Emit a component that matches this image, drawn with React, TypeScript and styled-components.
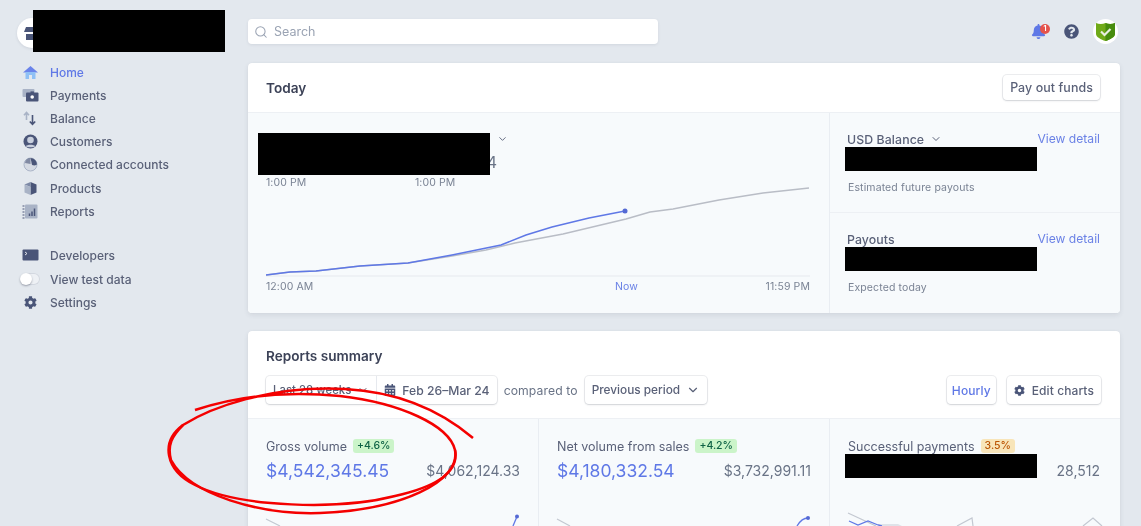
import React from "react";
import styled, { createGlobalStyle } from "styled-components";
import { ChevronDown, Search } from "lucide-react";
import { FaBell, FaCalendarAlt, FaCog, FaQuestionCircle } from "react-icons/fa";

const Global = createGlobalStyle`
  html, body { margin: 0; padding: 0; height: 526px; overflow: hidden; background: #e3e8ee; }
  * { box-sizing: border-box; }
  body { font-family: Inter, "Liberation Sans", sans-serif; color: #4f566b; font-size: 13px; }
`;

const Page = styled.div`
  position: relative;
  display: grid;
  grid-template-columns: 248px 872px;
  height: 526px;
  overflow: hidden;
  filter: blur(0.4px);
`;

const Sidebar = styled.aside`
  position: relative;
  padding: 18px 0 0 19px;
`;

const Brand = styled.div`
  width: 30px;
  height: 30px;
  margin-left: -2px;
  border-radius: 50%;
  background: #fff;
  display: flex;
  align-items: center;
  justify-content: center;
  box-shadow: 0 1px 3px rgba(60, 66, 87, 0.12);
  margin-bottom: 12.5px;
`;

const Redaction = styled.div<{ $w: number; $h: number }>`
  width: ${(p) => p.$w}px;
  height: ${(p) => p.$h}px;
  background: #000;
`;

const OverlayRedaction = styled(Redaction)<{ $l: number; $t: number }>`
  position: absolute;
  left: ${(p) => p.$l}px;
  top: ${(p) => p.$t}px;
`;

const MetricRedaction = styled(Redaction)`
  margin-left: -3px;
`;

const NavGroup = styled.nav`
  display: flex;
  flex-direction: column;
  margin-bottom: 21.5px;
`;

const NavItem = styled.div<{ $active?: boolean }>`
  display: flex;
  align-items: center;
  height: 23.2px;
  gap: 9px;
  font-size: 12px;
  font-weight: 500;
  color: ${(p) => (p.$active ? "#5f78e6" : "#5a6178")};
`;

const NavIcon = styled.span`
  width: 22px;
  display: flex;
  justify-content: center;
  align-items: center;
  flex: none;
`;

const Toggle = styled.span`
  position: relative;
  width: 20px;
  height: 12px;
  border-radius: 6px;
  background: #eef1f5;
  box-shadow: inset 0 0 0 1px #d3d8e0;
  &::after {
    content: "";
    position: absolute;
    left: 0;
    top: 0;
    width: 12px;
    height: 12px;
    border-radius: 50%;
    background: #fff;
    box-shadow: 0 1px 2px rgba(60, 66, 87, 0.45);
  }
`;

const Main = styled.main`
  padding-top: 19px;
  display: flex;
  flex-direction: column;
`;

const TopBar = styled.div`
  display: flex;
  align-items: center;
  justify-content: space-between;
  height: 25px;
  margin-bottom: 19px;
`;

const SearchBox = styled.div`
  width: 410px;
  height: 25px;
  background: #fff;
  border-radius: 4px;
  display: flex;
  align-items: center;
  gap: 6px;
  padding-left: 6px;
  color: #9aa3b3;
  font-size: 12.5px;
  box-shadow: 0 1px 3px rgba(60, 66, 87, 0.1);
`;

const TopIcons = styled.div`
  display: flex;
  align-items: center;
  margin-right: 2px;
`;

const BellWrap = styled.span`
  position: relative;
  display: flex;
  color: #5f78e6;
  margin-right: 18px;
`;

const BellBadge = styled.span`
  position: absolute;
  top: 0;
  right: -4px;
  width: 10px;
  height: 10px;
  border-radius: 50%;
  background: #e5534b;
  color: #fff;
  font-size: 7px;
  font-weight: 700;
  line-height: 10px;
  text-align: center;
`;

const HelpIcon = styled.span`
  display: flex;
  color: #4a5578;
  margin-right: 14px;
`;

const Avatar = styled.span`
  width: 25px;
  height: 25px;
  border-radius: 50%;
  background: #fff;
  display: flex;
  align-items: center;
  justify-content: center;
`;

const Card = styled.section`
  background: #fff;
  border-radius: 4px;
  box-shadow: 0 2px 5px rgba(60, 66, 87, 0.1), 0 0 1px rgba(60, 66, 87, 0.12);
`;

const TodayCard = styled(Card)`
  height: 250px;
  margin-bottom: 18px;
  display: flex;
  flex-direction: column;
`;

const CardHead = styled.header`
  height: 50px;
  flex: none;
  display: flex;
  align-items: center;
  justify-content: space-between;
  padding: 0 20px 0 18px;
  border-bottom: 1px solid #edf0f4;
`;

const CardTitle = styled.h2`
  margin: 0;
  font-size: 13.6px;
  font-weight: 600;
  color: #3c4257;
`;

const Button = styled.button<{ $blue?: boolean; $small?: boolean }>`
  height: ${(p) => (p.$small ? 28 : 25)}px;
  padding: 0 ${(p) => (p.$blue ? 5 : 7)}px;
  margin-left: 11px;
  border: 0;
  background: #fff;
  border-radius: 4px;
  display: inline-flex;
  align-items: center;
  gap: 7px;
  font: 500 ${(p) => (p.$small ? 12 : 12.4)}px Inter, "Liberation Sans", sans-serif;
  letter-spacing: 0.1px;
  color: ${(p) => (p.$blue ? "#5f78e6" : "#5a6178")};
  box-shadow: 0 1px 2px rgba(60, 66, 87, 0.16), 0 0 0 1px rgba(60, 66, 87, 0.09);
`;

const TodayBody = styled.div`
  flex: 1;
  display: grid;
  grid-template-columns: 581px 1px 290px;
  background: #f7fafc;
  border-radius: 0 0 4px 4px;
`;

const VLine = styled.div`
  background: #e9edf2;
`;

const ChartPane = styled.div`
  position: relative;
  padding: 19px 19px 0 18px;
  display: flex;
  flex-direction: column;
`;

const StatRow = styled.div`
  display: grid;
  grid-template-columns: 149px 82px 11px;
  height: 44px;
`;

const StatCell = styled.div`
  display: flex;
  flex-direction: column;
  justify-content: flex-end;
  font-size: 11px;
  color: #697386;
`;

const BigFour = styled.span`
  font-size: 16px;
  line-height: 20px;
  text-align: right;
  color: #697386;
  margin-bottom: 4px;
`;

const ChevronCell = styled.span`
  display: flex;
  justify-content: flex-end;
  color: #5a6178;
  padding-top: 1px;
`;

const ChartArt = styled.svg`
  display: block;
  width: 544px;
  height: 93px;
  margin-top: 9px;
`;

const AxisRow = styled.div`
  display: flex;
  position: relative;
  justify-content: space-between;
  font-size: 10.5px;
  color: #7a8394;
  margin-top: 2px;
  letter-spacing: 0.1px;
`;

const NowTick = styled.span`
  position: absolute;
  left: 349px;
  color: #6b82e6;
`;

const TimeLabels = styled.div`
  display: grid;
  grid-template-columns: 149px auto;
  font-size: 10.5px;
  color: #7a8394;
  height: 0;
  letter-spacing: 0.1px;
`;

const SidePane = styled.div`
  display: grid;
  grid-template-rows: 99px 1px 100px;
`;

const HLine = styled.div`
  background: #edf0f4;
`;

const Balance = styled.div`
  padding: 18px 20px 0 15px;
`;

const BalanceHead = styled.div`
  display: flex;
  align-items: center;
  justify-content: space-between;
  height: 16px;
  padding-left: 2px;
  font-size: 12.3px;
  font-weight: 500;
  letter-spacing: 0.1px;
  color: #5a6178;
`;

const BalanceLabel = styled.span`
  display: flex;
  align-items: center;
  gap: 6px;
`;

const Link = styled.span`
  color: #6b82e6;
  font-weight: 400;
  font-size: 12.1px;
  letter-spacing: 0;
  margin-top: -2px;
`;

const BalanceNote = styled.div`
  margin: 10px 0 0 3px;
  font-size: 10.5px;
  letter-spacing: 0.12px;
  color: #7a8394;
`;

const ReportsCard = styled(Card)`
  height: 300px;
`;

const ReportsHead = styled.div`
  height: 88px;
  padding: 17px 19px 0 18px;
  border-bottom: 1px solid #edf0f4;
  display: flex;
  flex-direction: column;
  gap: 12px;
`;

const FilterRow = styled.div`
  display: flex;
  align-items: center;
`;

const FilterGroup = styled.div`
  display: flex;
  align-items: center;
  height: 28px;
  background: #fff;
  border-radius: 4px;
  box-shadow: 0 1px 2px rgba(60, 66, 87, 0.16), 0 0 0 1px rgba(60, 66, 87, 0.09);
  font-weight: 500;
  color: #5a6178;
`;

const FilterPart = styled.span<{ $divided?: boolean; $size: number }>`
  display: flex;
  align-items: center;
  height: 100%;
  gap: 6px;
  padding: 0 7px;
  font-size: ${(p) => p.$size}px;
  border-left: ${(p) => (p.$divided ? "1px solid #e6e9ee" : "0")};
`;

const Compared = styled.span`
  margin: 0 7px;
  font-size: 12.2px;
  letter-spacing: 0.1px;
  color: #697386;
`;

const FilterSpacer = styled.span`
  flex: 1;
`;

const Metrics = styled.div`
  display: grid;
  grid-template-columns: 290px 291px 291px;
  background: #f7fafc;
  height: 211px;
`;

const Metric = styled.div<{ $first?: boolean }>`
  padding: 19px 18px 0 18px;
  border-left: ${(p) => (p.$first ? "0" : "1px solid #e9edf2")};
  &:last-child {
    padding-right: 20px;
  }
`;

const MetricHead = styled.div`
  display: flex;
  align-items: center;
  gap: 6px;
  height: 16px;
  font-size: 12.5px;
  color: #5a6178;
`;

const Pill = styled.span<{ $warn?: boolean }>`
  font-size: 10.5px;
  font-weight: 500;
  line-height: 14px;
  padding: 0 4px;
  border-radius: 3px;
  background: ${(p) => (p.$warn ? "#f8e5b9" : "#cbf4c9")};
  color: ${(p) => (p.$warn ? "#bb5504" : "#0e6245")};
`;

const MetricValues = styled.div`
  display: flex;
  align-items: center;
  justify-content: space-between;
  height: 24px;
`;

const MetricMain = styled.span`
  font-size: 17.5px;
  color: #5f78e6;
  margin-top: 8px;
`;

const MetricCompare = styled.span`
  font-size: 14px;
  color: #697386;
  margin-top: 9px;
`;

const Spark = styled.svg`
  display: block;
  width: 254px;
  height: 30px;
  margin-top: 34px;
  overflow: visible;
`;

const Scribble = styled.svg`
  position: absolute;
  left: 0;
  top: 0;
  width: 1141px;
  height: 526px;
  pointer-events: none;
`;

const D = "#4a5578";
const L = "#a9b3c6";

const Ic = ({ children }: { children: React.ReactNode }) => (
  <svg width="17" height="15" viewBox="0 0 17 15">{children}</svg>
);

const blue = [[0,90],[24,87],[50,86],[94,81],[142,78],[186,70],[235,60],[260,50],[286,42],[323,33],[359,26]];
const gray = [[0,90],[24,87],[50,86],[94,81],[142,78],[186,71],[220,65],[249,58],[297,49],[360,34],[384,27],[407,24],[453,15],[497,8],[543,3]];
const pts = (a: number[][]) => a.map((p) => p.join(",")).join(" ");

const navTop: [string, React.ReactNode, boolean?][] = [
  ["Home", <Ic><path d="M8.5 1 1 7.5h15z" fill="#6a83ea" /><path d="M3.5 7h10v7h-3.5v-4H7v4H3.5z" fill="#8fc0f5" /></Ic>, true],
  ["Payments", <Ic><rect x="0.5" y="1" width="12" height="8" rx="1" fill={L} /><rect x="4" y="4.5" width="12.5" height="9" rx="1" fill={D} /><circle cx="10.2" cy="9" r="1.8" fill="#fff" /><rect x="8.5" y="3.4" width="3.4" height="2" fill={D} /></Ic>],
  ["Balance", <Ic><path d="M4.5 9V2M2 4.3 4.5 1.5 7 4.3" fill="none" stroke={L} strokeWidth="1.6" /><path d="M10.5 4v9M7.8 10.5l2.7 2.8 2.7-2.8" fill="none" stroke={D} strokeWidth="1.6" /></Ic>],
  ["Customers", <Ic><circle cx="8.5" cy="7.5" r="7" fill={D} /><circle cx="8.5" cy="6" r="3.3" fill="#c9d0de" /><path d="M3.8 12.3c1.2-2 8.2-2 9.4 0-1.2 1.4-8.2 1.4-9.4 0z" fill="#c9d0de" /></Ic>],
  ["Connected accounts", <Ic><circle cx="8.5" cy="7.5" r="6.5" fill="#d5dae3" stroke={L} /><path d="M8.5 1a6.5 6.5 0 0 1 6.5 6.5c-1.5 1-3 1-4 .8-.6-.1-1-.5-1.2-1.1C9.5 5 9 3 8.5 1z" fill={D} /><path d="M3 6a5.5 5.5 0 0 1 5.5-5v6z" fill={D} opacity=".6" /></Ic>],
  ["Products", <Ic><path d="M8.5 1 14.5 3.5v8L8.5 14z" fill={D} /><path d="M8.5 1 2.5 3.5 8.5 6z" fill="#7d89a6" /><path d="M2.5 3.5 8.5 6v8l-6-2.5z" fill={L} /></Ic>],
  ["Reports", <Ic><rect x="3" y="0.5" width="12.5" height="14" rx="1" fill={L} /><path d="M0.5 2h2M0.5 5h2M0.5 8h2M0.5 11h2M0.5 14h2" stroke={D} strokeWidth="1" /><path d="M7.5 12V9.5M10 12V7.5M12.5 12V4.5" stroke={D} strokeWidth="1.5" /></Ic>],
];

const Sparkline = ({ g, b, dot, blob }: { g: string[]; b: string[]; dot?: [number, number]; blob?: string }) => (
  <Spark viewBox="0 0 254 30">
    {blob && <path d={blob} fill="#dfe3e9" />}
    {g.map((d, i) => <path key={i} d={d} fill="none" stroke="#c3c8d1" strokeWidth="1.2" />)}
    {b.map((d, i) => <path key={i} d={d} fill="none" stroke="#5f78e6" strokeWidth="1.3" />)}
    {dot && <circle cx={dot[0]} cy={dot[1]} r="2" fill="#5469d4" />}
  </Spark>
);

export default function App() {
  return (
    <>
      <Global />
      <Page>
        <Sidebar>
          <Brand>
            <svg width="16" height="15" viewBox="0 0 16 15"><path d="M2 1h12l2 5H0z" fill={D} /><rect x="2" y="8" width="12" height="6" fill={D} /></svg>
          </Brand>
          <OverlayRedaction $w={192} $h={42} $l={33} $t={10} />
          <NavGroup>
            {navTop.map(([label, icon, active]) => (
              <NavItem key={label} $active={active}>
                <NavIcon>{icon}</NavIcon>
                {label}
              </NavItem>
            ))}
          </NavGroup>
          <NavGroup>
            <NavItem>
              <NavIcon><Ic><rect x="0.5" y="1.5" width="16" height="11" rx="1" fill={D} /><path d="M3 4l2 1.5L3 7" fill="none" stroke="#fff" strokeWidth=".8" /></Ic></NavIcon>
              Developers
            </NavItem>
            <NavItem>
              <NavIcon><Toggle /></NavIcon>
              View test data
            </NavItem>
            <NavItem>
              <NavIcon><FaCog size={13} color={D} /></NavIcon>
              Settings
            </NavItem>
          </NavGroup>
        </Sidebar>

        <Main>
          <TopBar>
            <SearchBox><Search size={14} strokeWidth={1.8} />Search</SearchBox>
            <TopIcons>
              <BellWrap><FaBell size={15} /><BellBadge>1</BellBadge></BellWrap>
              <HelpIcon><FaQuestionCircle size={15} /></HelpIcon>
              <Avatar>
                <svg width="19" height="19" viewBox="0 0 19 19">
                  <path d="M0 1c3 1.2 6.5 1.2 9.5 0 3 1.2 6.5 1.2 9.5 0v11c0 3-5 5.5-9.5 7C5 17.5 0 15 0 12z" fill="#70aa18" />
                  <path d="M9.5 1c3 1.2 6.5 1.2 9.5 0v11c0 3-5 5.5-9.5 7z" fill="#478c0e" />
                  <path d="M5 9.5 8.5 13l6-6" fill="none" stroke="#e9efe0" strokeWidth="2.2" />
                </svg>
              </Avatar>
            </TopIcons>
          </TopBar>

          <TodayCard>
            <CardHead>
              <CardTitle>Today</CardTitle>
              <Button>Pay out funds</Button>
            </CardHead>
            <TodayBody>
              <ChartPane>
                <StatRow>
                  <StatCell />
                  <StatCell><BigFour>4</BigFour></StatCell>
                  <ChevronCell><ChevronDown size={12} /></ChevronCell>
                </StatRow>
                <TimeLabels><span>1:00 PM</span><span>1:00 PM</span></TimeLabels>
                <ChartArt viewBox="0 0 544 93">
                  <line x1="0" y1="91" x2="544" y2="91" stroke="#e6e9ee" />
                  <polyline points={pts(gray)} fill="none" stroke="#b9bdc6" strokeWidth="1.5" />
                  <polyline points={pts(blue)} fill="none" stroke="#5f78e6" strokeWidth="1.6" />
                  <circle cx="359" cy="26" r="2.5" fill="#5469d4" />
                </ChartArt>
                <AxisRow>
                  <span>12:00 AM</span>
                  <NowTick>Now</NowTick>
                  <span>11:59 PM</span>
                </AxisRow>
                <OverlayRedaction $w={232} $h={42} $l={10} $t={20} />
              </ChartPane>
              <VLine />
              <SidePane>
                <Balance>
                  <BalanceHead>
                    <BalanceLabel>USD Balance <ChevronDown size={12} /></BalanceLabel>
                    <Link>View detail</Link>
                  </BalanceHead>
                  <Redaction $w={192} $h={24} />
                  <BalanceNote>Estimated future payouts</BalanceNote>
                </Balance>
                <HLine />
                <Balance>
                  <BalanceHead>
                    <BalanceLabel>Payouts</BalanceLabel>
                    <Link>View detail</Link>
                  </BalanceHead>
                  <Redaction $w={192} $h={24} />
                  <BalanceNote>Expected today</BalanceNote>
                </Balance>
              </SidePane>
            </TodayBody>
          </TodayCard>

          <ReportsCard>
            <ReportsHead>
              <CardTitle>Reports summary</CardTitle>
              <FilterRow>
                <FilterGroup>
                  <FilterPart $size={11.4}>Last 28 weeks <ChevronDown size={12} /></FilterPart>
                  <FilterPart $size={12.2} $divided><FaCalendarAlt size={12} color={D} />Feb 26–Mar 24</FilterPart>
                </FilterGroup>
                <Compared>compared to</Compared>
                <FilterGroup>
                  <FilterPart $size={11.8}>Previous period <ChevronDown size={14} /></FilterPart>
                </FilterGroup>
                <FilterSpacer />
                <Button $blue $small>Hourly</Button>
                <Button $small><FaCog size={11} color={D} />Edit charts</Button>
              </FilterRow>
            </ReportsHead>
            <Metrics>
              <Metric $first>
                <MetricHead>Gross volume <Pill>+4.6%</Pill></MetricHead>
                <MetricValues><MetricMain>$4,542,345.45</MetricMain><MetricCompare>$4,062,124.33</MetricCompare></MetricValues>
                <Sparkline g={["M0 7 L14 14"]} b={["M247 14 L251 4.5"]} dot={[251, 4.5]} />
              </Metric>
              <Metric>
                <MetricHead>Net volume from sales <Pill>+4.2%</Pill></MetricHead>
                <MetricValues><MetricMain>$4,180,332.54</MetricMain><MetricCompare>$3,732,991.11</MetricCompare></MetricValues>
                <Sparkline g={["M0 7 L13 14"]} b={["M240 14 C243 9 246 6 251 6"]} dot={[251, 6]} />
              </Metric>
              <Metric>
                <MetricHead>Successful payments <Pill $warn>3.5%</Pill></MetricHead>
                <MetricValues><MetricRedaction $w={192} $h={24} /><MetricCompare>28,512</MetricCompare></MetricValues>
                <Sparkline
                  g={["M0 1 L28 14", "M109 14 L124 6 L125 14", "M235 14 L245 6 L254 14"]}
                  b={["M1 9 L10 13 L20 9 L30 13 L34 14"]}
                  blob="M30 12 H50 L54 14 H30z"
                />
              </Metric>
            </Metrics>
          </ReportsCard>
        </Main>

        <Scribble viewBox="0 0 1141 526">
          <path d="M473 438C440 410 400 392 345 389C270 385 210 408 183 425C160 442 165 470 195 485C240 508 340 510 395 496C440 486 459 470 455 450C449 425 400 403 340 396C290 391 240 395 195 410" fill="none" stroke="#f40000" strokeWidth="2.5" />
          <path d="M455 450C461 482 400 510 320 513C260 515 190 495 171 460C167 445 172 436 183 425" fill="none" stroke="#f40000" strokeWidth="2.5" />
        </Scribble>
      </Page>
    </>
  );
}
